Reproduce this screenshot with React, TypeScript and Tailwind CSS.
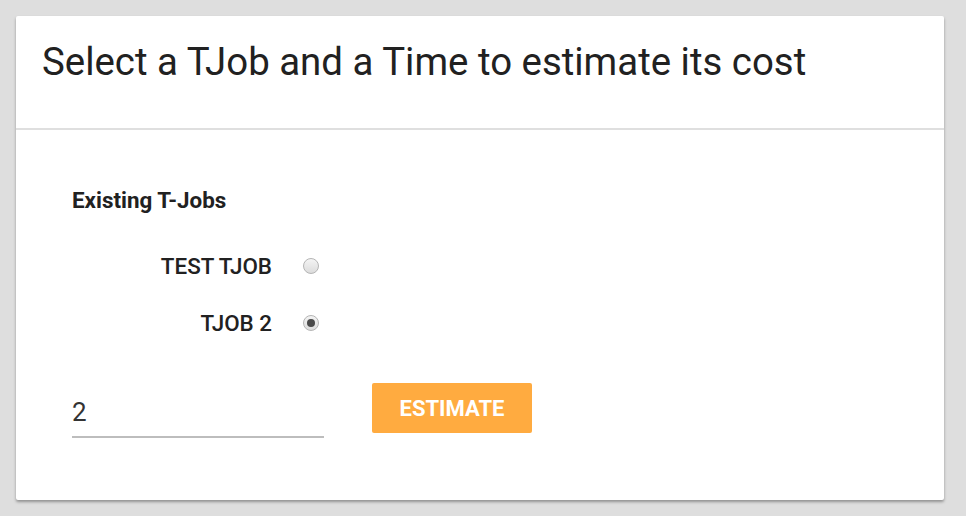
import React from "react";

function Radio({ checked }: { checked?: boolean }) {
  return (
    <span className="relative inline-flex h-[16px] w-[16px] items-center justify-center rounded-full border border-[#b5b5b5] bg-gradient-to-b from-[#f4f4f4] to-[#dcdcdc]">
      {checked && <span className="h-[8px] w-[8px] rounded-full bg-[#4a4a4a]" />}
    </span>
  );
}

export default function App() {
  return (
    <div
      className="min-h-[516px] w-full bg-[#dedede] pt-[16px] pl-[16px] pr-[22px]"
      style={{ fontFamily: "Roboto, 'Liberation Sans', sans-serif" }}
    >
      <div className="h-[484px] w-[928px] rounded-[2px] bg-white shadow-[0_2px_3px_rgba(0,0,0,0.35)]">
        <div className="h-[114px] border-b-2 border-[#dfdfdf] pl-[26px] pt-[23px]">
          <h1 className="text-[38.4px] leading-[46px] font-normal text-[#212121]">
            Select a TJob and a Time to estimate its cost
          </h1>
        </div>
        <div className="pl-[56px] pt-[56px]">
          <div className="text-[22.4px] leading-[28px] font-bold text-[#212121]">Existing T-Jobs</div>
          <div className="mt-[40px] flex flex-col gap-[33px]">
            <div className="flex items-center">
              <span className="w-[200px] text-right text-[22.4px] leading-[24px] font-medium text-[#212121]">TEST TJOB</span>
              <span className="ml-[31px] flex"><Radio /></span>
            </div>
            <div className="flex items-center">
              <span className="w-[200px] text-right text-[22.4px] leading-[24px] font-medium text-[#212121]">TJOB 2</span>
              <span className="ml-[31px] flex"><Radio checked /></span>
            </div>
          </div>
          <div className="mt-[48px] flex items-start">
            <div className="mt-[13px] w-[252px] border-b-2 border-[#bdbdbd] pb-[8px] text-[26px] leading-[32px] text-[#333]">
              2
            </div>
            <button className="ml-[48px] h-[50px] w-[160px] rounded-[2px] bg-[#ffab40] text-[22px] font-bold text-white">
              ESTIMATE
            </button>
          </div>
        </div>
      </div>
    </div>
  );
}
